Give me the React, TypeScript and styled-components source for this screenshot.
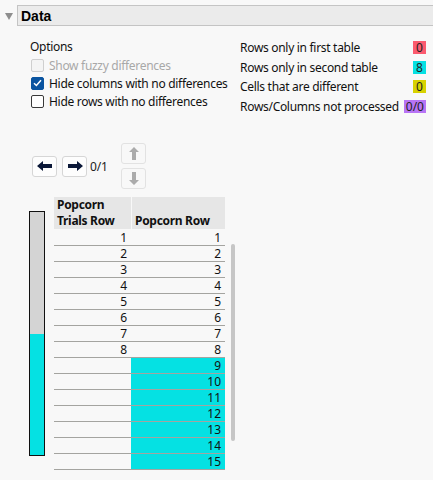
import React from "react";
import styled, { createGlobalStyle } from "styled-components";

const GlobalStyle = createGlobalStyle`
  html, body { margin: 0; padding: 0; background: #f8f8f8; }
  body { font-family: "Noto Sans", "Open Sans", sans-serif; font-size: 12px; color: #111; }
`;

const Page = styled.div`
  width: 433px;
  height: 480px;
  overflow: hidden;
  background: #f8f8f8;
`;

const HeaderRow = styled.div`
  display: flex;
  align-items: center;
  margin-top: 5px;
  padding-left: 5px;
`;

const Triangle = styled.div`
  width: 0;
  height: 0;
  border-left: 4.5px solid transparent;
  border-right: 4.5px solid transparent;
  border-top: 7px solid #8e8e8e;
  margin-right: 4px;
  margin-top: 1px;
`;

const TitleBox = styled.div`
  flex: 1;
  height: 19px;
  margin-right: -4px;
  background: #ebebeb;
  border: 1px solid #c4c4c4;
  display: flex;
  align-items: center;
  padding-left: 3px;
  font-family: "Liberation Sans", Arial, sans-serif;
  font-weight: bold;
  font-size: 14px;
  color: #000;
`;

const Body = styled.div`
  padding-left: 30px;
`;

const TopSection = styled.div`
  display: flex;
  margin-top: 13px;
`;

const OptionsCol = styled.div`
  width: 210px;
  display: flex;
  flex-direction: column;
`;

const OptionsLabel = styled.div`
  line-height: 16px;
  height: 17px;
  letter-spacing: -0.3px;
`;

const CheckRow = styled.label<{ $disabled?: boolean }>`
  display: flex;
  align-items: center;
  height: 18px;
  gap: 5px;
  padding-left: 1px;
  letter-spacing: -0.3px;
  color: ${(p) => (p.$disabled ? "#a8a8a8" : "#111")};
`;

const Box = styled.span<{ $checked?: boolean; $disabled?: boolean }>`
  width: 11px;
  height: 11px;
  border-radius: 2px;
  border: 1px solid
    ${(p) => (p.$disabled ? "#cfcfcf" : p.$checked ? "#0a54a0" : "#3a3a3a")};
  background: ${(p) => (p.$checked ? "#0a54a0" : p.$disabled ? "#f4f4f4" : "#fff")};
  display: flex;
  align-items: center;
  justify-content: center;
  flex: none;
`;

const LegendCol = styled.div`
  display: flex;
  flex-direction: column;
  margin-top: -1px;
`;

const LegendRow = styled.div`
  display: flex;
  align-items: center;
  height: 19.5px;
  width: 186px;
  justify-content: space-between;
  letter-spacing: -0.3px;
`;

const Badge = styled.span<{ $bg: string }>`
  background: ${(p) => p.$bg};
  min-width: 13px;
  height: 13px;
  line-height: 13px;
  text-align: center;
  padding: 0 2px;
  box-sizing: border-box;
  color: #222;
  letter-spacing: 0;
`;

const Nav = styled.div`
  display: flex;
  align-items: center;
  margin-top: 27px;
  margin-left: 2px;
`;

const NavButton = styled.div<{ $disabled?: boolean }>`
  width: 23px;
  height: 19px;
  border: 1px solid ${(p) => (p.$disabled ? "#e2e2e2" : "#d6d6d6")};
  border-radius: 3px;
  background: ${(p) => (p.$disabled ? "#f8f8f8" : "#fdfdfd")};
  display: flex;
  align-items: center;
  justify-content: center;
`;

const Gap = styled.div<{ $w: number }>`
  width: ${(p) => p.$w}px;
`;

const Count = styled.span`
  letter-spacing: -0.2px;
  color: #222;
  margin-left: 3px;
  width: 31px;
`;

const UpDown = styled.div`
  display: flex;
  flex-direction: column;
  gap: 4px;
`;

const TableArea = styled.div`
  display: flex;
  align-items: flex-start;
  margin-top: 8px;
  margin-left: -1px;
`;

const Meter = styled.div`
  width: 14px;
  height: 243px;
  margin-top: 14px;
  border: 1px solid #111;
  background: #d4d4d4;
  display: flex;
  flex-direction: column;
  justify-content: flex-end;
`;

const MeterFill = styled.div`
  background: #05e1e3;
`;

const Table = styled.div`
  margin-left: 9px;
  display: flex;
  flex-direction: column;
`;

const HeadRow = styled.div`
  display: grid;
  grid-template-columns: 77px 93px;
  column-gap: 1px;
  height: 32px;
  margin-bottom: 1px;
`;

const HeadCell = styled.div`
  background: #e6e6e6;
  font-weight: bold;
  font-size: 12px;
  line-height: 16px;
  letter-spacing: -0.3px;
  padding: 0 3px;
  display: flex;
  flex-direction: column;
  justify-content: flex-end;
  color: #111;
`;

const HeadLine = styled.span`
  display: block;
  height: 16px;
  white-space: nowrap;
`;

const Row = styled.div`
  display: grid;
  grid-template-columns: 77px 94px;
  height: 15px;
  border-bottom: 1px solid #a4a4a0;
`;

const Cell = styled.div<{ $hl?: boolean }>`
  background: ${(p) => (p.$hl ? "#05e1e3" : "transparent")};
  text-align: right;
  padding-right: 4px;
  line-height: 15px;
  color: #111;
`;

const ScrollTrack = styled.div`
  width: 4px;
  height: 197px;
  margin-top: 47px;
  margin-left: 6px;
  border-radius: 2px;
  background: #c6c6c6;
`;

const LeftArrow = () => (
  <svg width="16" height="10" viewBox="0 0 16 10">
    <path d="M0 5 L6 0 L6 3 L15 3 L15 7 L6 7 L6 10 Z" fill="#0b1838" />
  </svg>
);
const RightArrow = () => (
  <svg width="16" height="10" viewBox="0 0 16 10">
    <path d="M16 5 L10 0 L10 3 L1 3 L1 7 L10 7 L10 10 Z" fill="#0b1838" />
  </svg>
);
const UpArrow = () => (
  <svg width="10" height="13" viewBox="0 0 10 13">
    <path d="M5 0 L10 5 L7 5 L7 13 L3 13 L3 5 L0 5 Z" fill="#ababab" />
  </svg>
);
const DownArrow = () => (
  <svg width="10" height="13" viewBox="0 0 10 13">
    <path d="M5 13 L10 8 L7 8 L7 0 L3 0 L3 8 L0 8 Z" fill="#ababab" />
  </svg>
);
const Check = () => (
  <svg width="9" height="8" viewBox="0 0 9 8">
    <path d="M1 4.2 L3.4 6.5 L8 1.2" stroke="#fff" strokeWidth="1.5" fill="none" />
  </svg>
);

const legend = [
  { label: "Rows only in first table", value: "0", color: "#fb5a6e" },
  { label: "Rows only in second table", value: "8", color: "#05e1e3" },
  { label: "Cells that are different", value: "0", color: "#d8d200" },
  { label: "Rows/Columns not processed", value: "0/0", color: "#b874f5" },
];

const rows = Array.from({ length: 15 }, (_, i) => ({
  first: i < 8 ? String(i + 1) : "",
  second: String(i + 1),
  hl: i >= 8,
}));

export default function App() {
  const fillFraction = 8 / 16;
  return (
    <Page>
      <GlobalStyle />
      <HeaderRow>
        <Triangle />
        <TitleBox>Data</TitleBox>
      </HeaderRow>
      <Body>
        <TopSection>
          <OptionsCol>
            <OptionsLabel>Options</OptionsLabel>
            <CheckRow $disabled>
              <Box $disabled />
              Show fuzzy differences
            </CheckRow>
            <CheckRow>
              <Box $checked>
                <Check />
              </Box>
              Hide columns with no differences
            </CheckRow>
            <CheckRow>
              <Box />
              Hide rows with no differences
            </CheckRow>
          </OptionsCol>
          <LegendCol>
            {legend.map((l) => (
              <LegendRow key={l.label}>
                <span>{l.label}</span>
                <Badge $bg={l.color}>{l.value}</Badge>
              </LegendRow>
            ))}
          </LegendCol>
        </TopSection>
        <Nav>
          <NavButton>
            <LeftArrow />
          </NavButton>
          <Gap $w={5} />
          <NavButton>
            <RightArrow />
          </NavButton>
          <Count>0/1</Count>
          <UpDown>
            <NavButton $disabled>
              <UpArrow />
            </NavButton>
            <NavButton $disabled>
              <DownArrow />
            </NavButton>
          </UpDown>
        </Nav>
        <TableArea>
          <Meter>
            <MeterFill style={{ height: `${fillFraction * 100}%` }} />
          </Meter>
          <Table>
            <HeadRow>
              <HeadCell>
                <HeadLine>Popcorn</HeadLine>
                <HeadLine>Trials Row</HeadLine>
              </HeadCell>
              <HeadCell>
                <HeadLine>Popcorn Row</HeadLine>
              </HeadCell>
            </HeadRow>
            {rows.map((r) => (
              <Row key={r.second}>
                <Cell>{r.first}</Cell>
                <Cell $hl={r.hl}>{r.second}</Cell>
              </Row>
            ))}
          </Table>
          <ScrollTrack />
        </TableArea>
      </Body>
    </Page>
  );
}
